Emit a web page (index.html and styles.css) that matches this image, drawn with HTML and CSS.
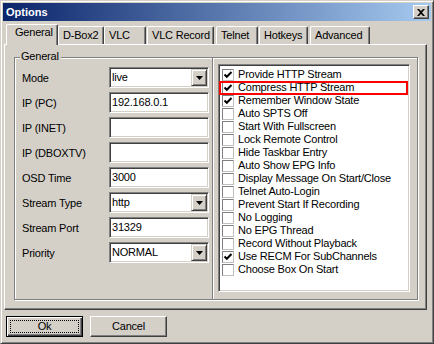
FILE: index.html
```html
<!DOCTYPE html>
<html>
<head>
<meta charset="utf-8">
<title>Options</title>
<link rel="stylesheet" href="styles.css">
</head>
<body>
<div class="window">
  <div class="titlebar">
    <span class="title">Options</span>
    <span class="close-btn">
      <svg width="8" height="7" viewBox="0 0 8 7"><path d="M0 0h2l2 2 2-2h2L5 3.5 8 7H6L4 5 2 7H0l3-3.5z" fill="#000"/></svg>
    </span>
  </div>

  <div class="tabs">
    <div class="tab active t-general">General</div>
    <div class="tab t-dbox">D-Box2</div>
    <div class="tab t-vlc">VLC</div>
    <div class="tab t-rec">VLC Record</div>
    <div class="tab t-telnet">Telnet</div>
    <div class="tab t-hotkeys">Hotkeys</div>
    <div class="tab t-adv">Advanced</div>
  </div>

  <div class="panel">
    <div class="group">
      <span class="legend">General</span>

      <div class="fields">
        <div class="row">
          <span class="label">Mode</span>
          <div class="field combo"><span class="value">live</span><span class="drop"><svg width="7" height="4" viewBox="0 0 7 4"><path d="M0 0h7L3.5 4z" fill="#000"/></svg></span></div>
        </div>
        <div class="row">
          <span class="label">IP (PC)</span>
          <div class="field"><span class="value">192.168.0.1</span></div>
        </div>
        <div class="row">
          <span class="label">IP (INET)</span>
          <div class="field"><span class="value"></span></div>
        </div>
        <div class="row">
          <span class="label">IP (DBOXTV)</span>
          <div class="field"><span class="value"></span></div>
        </div>
        <div class="row">
          <span class="label">OSD Time</span>
          <div class="field"><span class="value">3000</span></div>
        </div>
        <div class="row">
          <span class="label">Stream Type</span>
          <div class="field combo"><span class="value">http</span><span class="drop"><svg width="7" height="4" viewBox="0 0 7 4"><path d="M0 0h7L3.5 4z" fill="#000"/></svg></span></div>
        </div>
        <div class="row">
          <span class="label">Stream Port</span>
          <div class="field"><span class="value">31329</span></div>
        </div>
        <div class="row">
          <span class="label">Priority</span>
          <div class="field combo"><span class="value">NORMAL</span><span class="drop"><svg width="7" height="4" viewBox="0 0 7 4"><path d="M0 0h7L3.5 4z" fill="#000"/></svg></span></div>
        </div>
      </div>

      <div class="divider"></div>

      <div class="listbox">
        <div class="item"><span class="check on"></span>Provide HTTP Stream</div>
        <div class="item marked"><span class="check on"></span>Compress HTTP Stream</div>
        <div class="item"><span class="check on"></span>Remember Window State</div>
        <div class="item"><span class="check"></span>Auto SPTS Off</div>
        <div class="item"><span class="check"></span>Start With Fullscreen</div>
        <div class="item"><span class="check"></span>Lock Remote Control</div>
        <div class="item"><span class="check"></span>Hide Taskbar Entry</div>
        <div class="item"><span class="check"></span>Auto Show EPG Info</div>
        <div class="item"><span class="check"></span>Display Message On Start/Close</div>
        <div class="item"><span class="check"></span>Telnet Auto-Login</div>
        <div class="item"><span class="check"></span>Prevent Start If Recording</div>
        <div class="item"><span class="check"></span>No Logging</div>
        <div class="item"><span class="check"></span>No EPG Thread</div>
        <div class="item"><span class="check"></span>Record Without Playback</div>
        <div class="item"><span class="check on"></span>Use RECM For SubChannels</div>
        <div class="item"><span class="check"></span>Choose Box On Start</div>
      </div>
    </div>
  </div>

  <div class="buttons">
    <div class="btn default"><span>Ok</span></div>
    <div class="btn"><span>Cancel</span></div>
  </div>
</div>
</body>
</html>
```

FILE: styles.css
```css
body {
  margin: 0;
  font-family: "Liberation Sans", Arial, sans-serif;
  font-size: 11px;
  letter-spacing: -0.2px;
  color: #000;
  background: #d4d0c8;
}

.window {
  width: 434px;
  height: 344px;
  box-sizing: border-box;
  background: #d4d0c8;
  border: 1px solid;
  border-color: #d4d0c8 #404040 #404040 #d4d0c8;
  box-shadow: inset 1px 1px #fff, inset -1px -1px #808080;
  padding: 2px;
}

/* title bar */
.titlebar {
  height: 18px;
  display: flex;
  align-items: center;
  justify-content: space-between;
  background: linear-gradient(to right, #0a246a, #a6caf0);
  padding-left: 3px;
}

.title {
  color: #fff;
  font-weight: bold;
  font-size: 11px;
  letter-spacing: 0;
  line-height: 14px;
}

.close-btn {
  width: 16px;
  height: 14px;
  box-sizing: border-box;
  margin-right: 2px;
  background: #d4d0c8;
  border: 1px solid;
  border-color: #fff #404040 #404040 #fff;
  box-shadow: inset -1px -1px #808080;
  display: flex;
  align-items: center;
  justify-content: center;
}

/* tabs */
.tabs {
  display: flex;
  align-items: flex-end;
  height: 20px;
  margin: 3px 0 0 3px;
}

.tab {
  height: 18px;
  box-sizing: border-box;
  border-top: 1px solid #fff;
  border-left: 1px solid #fff;
  border-right: 1px solid #404040;
  box-shadow: inset -1px 0 #808080;
  border-radius: 2px 2px 0 0;
  padding: 2px 0 0 4px;
  line-height: 13px;
  white-space: nowrap;
}

.tab.active {
  height: 21px;
  margin-bottom: -1px;
  position: relative;
  z-index: 1;
  background: #d4d0c8;
  padding: 1px 0 0 8px;
}

.t-general { width: 52px; }
.t-dbox { width: 46px; }
.t-vlc { width: 42px; }
.t-rec { width: 67px; margin-left: 1px; }
.t-telnet { width: 42px; margin-left: 2px; }
.t-hotkeys { width: 49px; margin-left: 1px; }
.t-adv { width: 60px; margin-left: 2px; }

/* tab page */
.panel {
  width: 423px;
  height: 266px;
  box-sizing: border-box;
  margin-left: 1px;
  border: 1px solid;
  border-color: #fff #404040 #404040 #fff;
  box-shadow: inset -1px -1px #808080;
  padding: 12px 0 0 9px;
}

.group {
  position: relative;
  width: 404px;
  height: 243px;
  box-sizing: border-box;
  border: 1px solid #808080;
  box-shadow: inset 1px 1px #fff, 1px 1px #fff;
  display: flex;
}

.legend {
  position: absolute;
  left: 5px;
  top: -8px;
  padding: 0 2px 0 1px;
  background: #d4d0c8;
  line-height: 13px;
}

.fields {
  display: flex;
  flex-direction: column;
  gap: 4px;
  padding: 9px 0 0 7px;
}

.row {
  display: flex;
  align-items: center;
  height: 21px;
}

.label {
  width: 87px;
}

.field {
  width: 100px;
  height: 21px;
  box-sizing: border-box;
  background: #fff;
  border: 1px solid;
  border-color: #808080 #fff #fff #808080;
  box-shadow: inset 1px 1px #404040, inset -1px -1px #d4d0c8;
  padding: 1px 2px 1px 2px;
  display: flex;
  align-items: center;
  justify-content: space-between;
}

.value {
  line-height: 17px;
}

.drop {
  width: 16px;
  height: 17px;
  box-sizing: border-box;
  margin-right: -1px;
  background: #d4d0c8;
  border: 1px solid;
  border-color: #d4d0c8 #404040 #404040 #d4d0c8;
  box-shadow: inset 1px 1px #fff, inset -1px -1px #808080;
  display: flex;
  align-items: center;
  justify-content: center;
}

.divider {
  width: 1px;
  margin-left: 3px;
  background: #808080;
  border-right: 1px solid #fff;
}

/* check list */
.listbox {
  width: 192px;
  height: 228px;
  box-sizing: border-box;
  margin: 6px 0 0 4px;
  background: #fff;
  border: 1px solid;
  border-color: #808080 #fff #fff #808080;
  box-shadow: inset 1px 1px #404040, inset -1px -1px #d4d0c8;
  padding: 3px 1px 0 1px;
}

.item {
  position: relative;
  height: 13px;
  display: flex;
  align-items: center;
  line-height: 13px;
  padding-left: 2px;
  white-space: nowrap;
}

.item.marked::after {
  content: "";
  position: absolute;
  left: -1px;
  right: 0;
  top: 0;
  height: 14px;
  box-sizing: border-box;
  border: 2px solid #f00;
}

.check {
  width: 12px;
  height: 12px;
  box-sizing: border-box;
  margin-right: 4px;
  border: 1px solid;
  border-color: #808080 #c0c0c0 #c0c0c0 #808080;
  background: #fff;
}

.check.on {
  background: #fff url("data:image/svg+xml,%3Csvg xmlns='http://www.w3.org/2000/svg' width='10' height='10' viewBox='0 0 10 10'%3E%3Cpath d='M1.5 4.5 L3.8 6.8 L8.5 2' fill='none' stroke='%23000' stroke-width='2'/%3E%3C/svg%3E") no-repeat center;
}

/* buttons */
.buttons {
  display: flex;
  gap: 7px;
  margin: 6px 0 0 3px;
}

.btn {
  width: 77px;
  height: 21px;
  box-sizing: border-box;
  border: 1px solid;
  border-color: #fff #404040 #404040 #fff;
  box-shadow: inset -1px -1px #808080;
  display: flex;
  align-items: center;
  justify-content: center;
  line-height: 13px;
}

.btn.default {
  border-color: #000;
  box-shadow: inset 1px 1px #fff, inset -1px -1px #404040, inset -2px -2px #808080;
  outline: 1px dotted #000;
  outline-offset: -5px;
}
```
